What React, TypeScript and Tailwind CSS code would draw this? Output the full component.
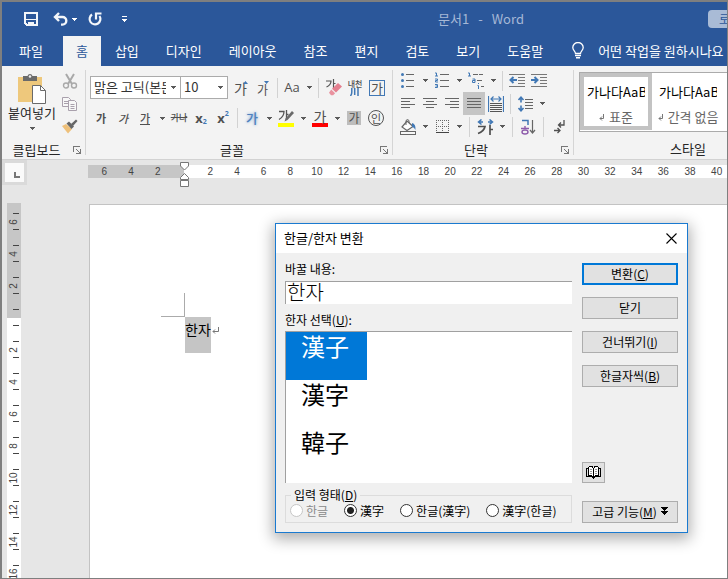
import { useState, type ReactNode } from "react";

const FONT = "font-['Noto_Sans_CJK_KR','Noto_Sans',sans-serif]";

/* ---------- shared pieces ---------- */

function CaretIcon() {
  return (
    <svg width="5" height="3" viewBox="0 0 5 3" fill="#5a5a5a" shapeRendering="crispEdges" aria-hidden="true">
      <path d="M0 0h5v1H4v1H3v1H2V2H1V1H0z" />
    </svg>
  );
}

function Caret({ label }: { label: string }) {
  return (
    <button type="button" aria-label={label} className="flex h-[22px] w-3 items-center justify-center">
      <CaretIcon />
    </button>
  );
}

function Tool({ label, pressed, children }: { label: string; pressed?: boolean; children: ReactNode }) {
  return (
    <button
      type="button"
      aria-label={label}
      className={
        "flex w-[22px] shrink-0 items-center justify-center whitespace-nowrap text-[#505050] " +
        (pressed ? "h-[23px] bg-[#c5c5c5]" : "h-[22px]")
      }
    >
      {children}
    </button>
  );
}

function Sep({ wide }: { wide?: boolean }) {
  return <span className={"h-5 w-px shrink-0 bg-[#d2d2d2] " + (wide ? "mx-1" : "mx-[3px]")} />;
}

function Launcher({ label }: { label: string }) {
  return (
    <button type="button" aria-label={label} className="flex size-3 items-center justify-center">
      <svg width="8" height="8" viewBox="0 0 8 8" fill="none" stroke="#777" shapeRendering="crispEdges">
        <path d="M0.5 6V0.5H7M7.5 3v4.5H3M3 3l4 4" />
      </svg>
    </button>
  );
}

function Group({ title, className, children }: { title: string; className: string; children: ReactNode }) {
  return (
    <section aria-label={title} className={"flex h-[93px] shrink-0 flex-col pt-[3px] " + className}>
      {children}
      <div className="mt-auto flex h-[18px] items-center pr-[2px]">
        <span className="flex-1 text-center text-[13px] leading-4 text-[#262626]">{title}</span>
        <Launcher label={title + " 설정"} />
      </div>
    </section>
  );
}

function GroupLine() {
  return <div className="my-1 w-px shrink-0 bg-[#d5d5d5]" />;
}

function Lines({ rows }: { rows: [number, number][] }) {
  return (
    <svg width="14" height="13" viewBox="0 0 14 13" fill="#666" shapeRendering="crispEdges" aria-hidden="true">
      {rows.map(([x, w], i) => (
        <rect key={i} x={x} y={1 + i * 3} width={w} height="1" />
      ))}
    </svg>
  );
}

/* ---------- title bar ---------- */

function TitleBar() {
  return (
    <header className="flex h-[34px] shrink-0 items-center bg-[#2b579a] pl-[22px] text-[13px] text-[#a6b8d6]">
      <div className="flex w-[105px] shrink-0 items-center text-white">
        <button type="button" aria-label="저장">
          <svg width="14" height="14" viewBox="0 0 14 14" fill="none" stroke="#f3f6fa" strokeWidth="2" shapeRendering="crispEdges">
            <path d="M1 1h12v12H3L1 11z" />
            <path d="M2 7.500h10" strokeWidth="1" />
            <path d="M4 10h6v4H7v-2H6v2H4z" fill="#f3f6fa" stroke="none" />
          </svg>
        </button>
        <button type="button" aria-label="실행 취소" className="ml-[15px]">
          <svg width="15" height="14" viewBox="0 0 15 14" fill="none" stroke="#f3f6fa" strokeWidth="2.400">
            <path d="M6 1 2 5l4 4M2 5h7.500a3.800 3.800 0 0 1 0 7.600H8" />
          </svg>
        </button>
        <button type="button" aria-label="실행 취소 목록" className="ml-1">
          <svg width="5" height="3" viewBox="0 0 5 3" fill="#fff" shapeRendering="crispEdges">
            <path d="M0 0h5v1H4v1H3v1H2V2H1V1H0z" />
          </svg>
        </button>
        <button type="button" aria-label="다시 실행" className="ml-[11px]">
          <svg width="14" height="14" viewBox="0 0 14 14" fill="none" stroke="#f3f6fa" strokeWidth="2.200">
            <path d="M4 2.500A5.400 5.400 0 1 0 11.500 4" />
            <path d="M8 7.500V1.500h5.500" />
          </svg>
        </button>
        <button type="button" aria-label="빠른 실행 도구 모음 사용자 지정" className="ml-5">
          <svg width="5" height="6" viewBox="0 0 5 6" fill="#fff" shapeRendering="crispEdges">
            <path d="M0 0h5v1H0zM0 3h5v1H4v1H3v1H2V5H1V4H0z" />
          </svg>
        </button>
      </div>
      <h1 className="flex min-w-0 flex-1 justify-center gap-[9px] pl-[125px] leading-4">
        <span>문서1</span>
        <span>-</span>
        <span>Word</span>
      </h1>
      <div className="flex w-[19px] justify-end overflow-hidden">
        <button type="button" className="flex h-[18px] w-full shrink-0 items-center overflow-hidden rounded-l-sm bg-[#a9bbd6] pl-[11px] text-xs whitespace-nowrap text-[#2b579a]">
          로그인
        </button>
      </div>
    </header>
  );
}

const TABS = ["삽입", "디자인", "레이아웃", "참조", "편지", "검토", "보기", "도움말"];

function TabBar() {
  return (
    <nav className="flex h-[30px] shrink-0 gap-px overflow-hidden bg-[#2b579a] pb-px text-[13px] leading-4 whitespace-nowrap text-white">
      <button type="button" className="mr-[2px] px-[17px]">파일</button>
      <button type="button" className="-mb-px bg-[#f3f3f3] px-[13px] text-[#2b579a]">홈</button>
      {TABS.map((t) => (
        <button key={t} type="button" className="px-[13px]">
          {t}
        </button>
      ))}
      <button type="button" className="flex items-center gap-[14px] pl-[15px]">
        <svg width="12" height="17" viewBox="0 0 12 17" fill="none" stroke="#fff" aria-hidden="true">
          <path d="M3.500 11.500C3.500 9 .8 8.500 .8 5.500a5.200 5 0 0 1 10.400 0c0 3-2.700 3.500-2.700 6z" strokeWidth="1.300" />
          <path d="M3 13.500h6M4 15.800h4" strokeWidth="1.400" />
        </svg>
        어떤 작업을 원하시나요
      </button>
    </nav>
  );
}

/* ---------- ribbon ---------- */

function ClipboardGroup() {
  return (
    <Group title="클립보드" className="w-[83px]">
      <div className="flex gap-[5px] pl-[5px]">
        <button type="button" className="flex w-[50px] flex-col items-center pt-1 text-[13px] leading-4 whitespace-nowrap text-[#262626]">
          <svg width="28" height="32" viewBox="0 0 28 32" aria-hidden="true">
            <rect x="0" y="4" width="24" height="25" fill="#eec87c" />
            <path d="M5 3h4.500a2.600 2.600 0 0 1 5 0H19v5H5z" fill="#6a6a6a" />
            <circle cx="12" cy="3.500" r="1.300" fill="#eee" />
            <path d="M14.500 12.500h8l5 5v13h-13z" fill="#fff" stroke="#6a6a6a" />
            <path d="M22.500 12.500v5h5" fill="none" stroke="#6a6a6a" />
          </svg>
          붙여넣기
          <span className="flex h-[14px] items-center">
            <CaretIcon />
          </span>
        </button>
        <div className="flex flex-col">
          <button type="button" aria-label="잘라내기" className="flex h-[23px] items-center">
            <svg width="16" height="16" viewBox="0 0 16 16" fill="none" stroke="#a9a9a9">
              <path d="M4 1l6 10M12 1L6 11" strokeWidth="2" />
              <circle cx="4" cy="12.500" r="2.500" strokeWidth="1.400" />
              <circle cx="12" cy="12.500" r="2.500" strokeWidth="1.400" />
            </svg>
          </button>
          <button type="button" aria-label="복사" className="flex h-[23px] items-center">
            <svg width="16" height="14" viewBox="0 0 16 14" fill="#f7f7f7" stroke="#a9a0ac">
              <path d="M.5.5h6l2 2v7h-8z" />
              <path d="M6.500 3.500h6l2 2v8h-8z" />
              <path d="M2 4.500h4M2 6.500h4M8.500 7.500h4M8.500 9.500h4M8.500 11.500h4" />
            </svg>
          </button>
          <button type="button" aria-label="서식 복사" className="flex h-[23px] items-center">
            <svg width="16" height="15" viewBox="0 0 16 15">
              <path d="M0 7l4-2 6 5-4 4.500z" fill="#eec07a" />
              <path d="M4.500 4.500L7 2.500l5 5-2.500 2.500z" fill="#666" />
              <path d="M9 5l5-4.500L15.500 2 11 7z" fill="#666" />
            </svg>
          </button>
        </div>
      </div>
    </Group>
  );
}

function Combo({ label, value, className }: { label: string; value: string; className: string }) {
  return (
    <div className={"relative h-[23px] " + className}>
      <select
        aria-label={label}
        className="block h-full w-full appearance-none overflow-hidden border border-[#ababab] bg-white pr-[14px] pb-[2px] pl-[3px] text-[13px] leading-4 text-[#333]"
      >
        <option>{value}</option>
      </select>
      <span className="pointer-events-none absolute top-0 right-[5px] flex h-full items-center">
        <CaretIcon />
      </span>
    </div>
  );
}

function FontGroup() {
  return (
    <Group title="글꼴" className="w-[306px]">
      <div className="flex flex-col gap-2 pt-[7px] pl-1">
        <div className="flex items-center">
          <div className="mr-[2px] flex">
            <Combo label="글꼴" value="맑은 고딕(본문 한글)" className="w-[91px]" />
            <Combo label="글꼴 크기" value="10" className="-ml-px w-[48px]" />
          </div>
          <Tool label="글꼴 크기 크게">
            <span className="text-[14px] leading-4">가</span>
            <svg width="5" height="14" viewBox="0 0 5 14" fill="#4178b5" className="-ml-1">
              <path d="M0 3L2.500 0 5 3z" />
            </svg>
          </Tool>
          <Tool label="글꼴 크기 작게">
            <span className="pt-1 text-[12px] leading-4">가</span>
            <svg width="5" height="14" viewBox="0 0 5 14" fill="#4178b5" className="-ml-1">
              <path d="M0 0h5L2.500 3z" />
            </svg>
          </Tool>
          <Sep />
          <Tool label="대/소문자 바꾸기">
            <span className="font-['Open_Sans',sans-serif] text-[13px]">Aa</span>
          </Tool>
          <Caret label="대/소문자 목록" />
          <Sep />
          <Tool label="모든 서식 지우기">
            <svg width="17" height="17" viewBox="0 0 17 17">
              <path d="M1 2h5q0 4-4.500 6M8.500 0v9M8.500 4.500h2" fill="none" stroke="#555" strokeWidth="1.200" />
              <path d="M13 4l4 3.500-6 6-4-3.800z" fill="#e47f8f" />
              <path d="M6.200 10.600l3.900 3.700-2 2H6l-2-2.500z" fill="#e9929f" />
            </svg>
          </Tool>
          <Tool label="윗주 달기">
            <span className="flex flex-col items-center">
              <span className="text-[8px] leading-[9px] font-medium">내천</span>
              <svg width="9" height="8" viewBox="0 0 9 8" fill="none" stroke="#4178b5" strokeWidth="1.500">
                <path d="M1.800 0v4q0 3-1.500 4M4.700 0v7M8 0v8" />
              </svg>
            </span>
          </Tool>
          <Tool label="문자 테두리">
            <span className="flex size-4 items-center justify-center border border-[#4178b5] text-[13px] leading-none">가</span>
          </Tool>
        </div>
        <div className="flex items-center">
          <Tool label="굵게">
            <span className="text-[11px] leading-4 font-bold">가</span>
          </Tool>
          <Tool label="기울임꼴">
            <span className="text-[11px] leading-4 font-medium italic">가</span>
          </Tool>
          <Tool label="밑줄">
            <span className="border-b border-[#505050] text-[11px] leading-3 font-medium">가</span>
          </Tool>
          <Caret label="밑줄 목록" />
          <Tool label="취소선">
            <span className="text-[9px] font-medium line-through">가나</span>
          </Tool>
          <Tool label="아래 첨자">
            <span className="flex items-end font-['Open_Sans',sans-serif] text-[13px] leading-4 font-bold">
              x<span className="text-[7px] leading-[8px] text-[#4178b5]">2</span>
            </span>
          </Tool>
          <Tool label="위 첨자">
            <span className="flex items-start font-['Open_Sans',sans-serif] text-[13px] leading-4 font-bold">
              x<span className="text-[7px] leading-[8px] text-[#4178b5]">2</span>
            </span>
          </Tool>
          <Sep />
          <Tool label="텍스트 효과">
            <span className="text-[13px] leading-4 font-medium text-[#4f81bd] [text-shadow:0_0_3px_#6b9bd2]">가</span>
          </Tool>
          <Caret label="텍스트 효과 목록" />
          <Tool label="텍스트 강조 색">
            <svg width="16" height="17" viewBox="0 0 16 17">
              <path d="M1 1.500h5q0 5-5 8M8.500 0v9M8.500 4.500h2" fill="none" stroke="#555" strokeWidth="1.300" />
              <path d="M14 1l2 2-6.500 7-3 1.500 1-3z" fill="#6a6a6a" />
              <rect y="13" width="16" height="4" fill="#ff0" />
            </svg>
          </Tool>
          <Caret label="강조 색 목록" />
          <Tool label="글꼴 색">
            <span className="flex w-4 flex-col items-center border-b-4 border-[#f00] text-[14px] leading-[13px]">가</span>
          </Tool>
          <Caret label="글꼴 색 목록" />
          <Tool label="문자 음영">
            <span className="flex size-[14px] items-center justify-center bg-[#bdbdbd] text-[12px] leading-none">가</span>
          </Tool>
          <Tool label="원 문자">
            <span className="flex size-4 items-center justify-center rounded-full border border-[#555] text-[11px] leading-none">인</span>
          </Tool>
        </div>
      </div>
    </Group>
  );
}

function ParagraphGroup() {
  return (
    <Group title="단락" className="w-[180px]">
      <div className="flex flex-col pl-1">
        <div className="flex h-[23px] items-center">
          <Tool label="글머리 기호">
            <svg width="14" height="15" viewBox="0 0 14 15">
              <g fill="#4178b5">
                <circle cx="1.500" cy="1.500" r="1.500" />
                <circle cx="1.500" cy="7.500" r="1.500" />
                <circle cx="1.500" cy="13.500" r="1.500" />
              </g>
              <path d="M5 1.500h8M5 7.500h8M5 13.500h8" stroke="#666" />
            </svg>
          </Tool>
          <Caret label="글머리 기호 목록" />
          <Tool label="번호 매기기">
            <svg width="14" height="17" viewBox="0 0 14 17" fill="none">
              <path d="M0 1h1.500v3M0 4h3M0 7h2.500v1.500H.5V10H3M0 12.500h2.500v3H0M.5 14h2" stroke="#4178b5" />
              <path d="M5 2.500h9M5 8.500h9M5 14.500h9" stroke="#666" />
            </svg>
          </Tool>
          <Caret label="번호 목록" />
          <Tool label="다단계 목록">
            <svg width="17" height="17" viewBox="0 0 17 17" fill="none">
              <path d="M0 1h1.500v3M0 4h3M4.500 7H7v3.500H4.500v-2H7M10.500 11v1M9.500 13.500h1V17" stroke="#4178b5" />
              <path d="M5 2.500h10M9 8.500h6M13 14.500h3" stroke="#666" strokeDasharray="5 1" />
            </svg>
          </Tool>
          <Caret label="다단계 목록 선택" />
          <Sep />
          <Tool label="내어쓰기">
            <svg width="16" height="13" viewBox="0 0 16 13" fill="none">
              <path d="M0 .5h16M9 3.500h7M9 6.500h7M9 9.500h7M0 12.500h16" stroke="#777" />
              <path d="M8 6H1.500M4.500 3L1.500 6l3 3" stroke="#4178b5" strokeWidth="2" />
            </svg>
          </Tool>
          <Tool label="들여쓰기">
            <svg width="16" height="13" viewBox="0 0 16 13" fill="none">
              <path d="M0 .5h16M9 3.500h7M9 6.500h7M9 9.500h7M0 12.500h16" stroke="#777" />
              <path d="M0 6h6M3.500 3l3 3-3 3" stroke="#4178b5" strokeWidth="2" />
            </svg>
          </Tool>
        </div>
        <div className="flex h-[23px] items-center">
          <Tool label="왼쪽 맞춤"><Lines rows={[[0, 14], [0, 9], [0, 14], [0, 9]]} /></Tool>
          <Tool label="가운데 맞춤"><Lines rows={[[0, 14], [3, 8], [0, 14], [3, 8]]} /></Tool>
          <Tool label="오른쪽 맞춤"><Lines rows={[[0, 14], [5, 9], [0, 14], [5, 9]]} /></Tool>
          <Tool label="양쪽 맞춤" pressed><Lines rows={[[0, 14], [0, 14], [0, 14], [0, 14]]} /></Tool>
          <Tool label="균등 분할">
            <svg width="16" height="16" viewBox="0 0 16 16" fill="none">
              <path d="M.5 0v16M15.500 0v16M3 3h10M5.500 .5L3 3l2.500 2.500M10.500 .5L13 3l-2.500 2.500" stroke="#4178b5" strokeWidth="1.200" />
              <path d="M2 7.500h12M2 9.500h12M2 11.500h12M2 13.500h12M2 15.500h12" stroke="#555" />
            </svg>
          </Tool>
          <Sep />
          <Tool label="줄 간격">
            <svg width="15" height="16" viewBox="0 0 15 16" fill="none">
              <path d="M3 1v5.500M3 9.500V15M.5 4L3 1.200 5.500 4M.5 12L3 14.800 5.500 12" stroke="#4178b5" strokeWidth="1.600" />
              <path d="M7 3.500h8M7 6.500h8M7 9.500h8M7 12.500h8" stroke="#666" />
            </svg>
          </Tool>
          <Caret label="줄 간격 목록" />
        </div>
        <div className="flex h-[23px] items-center">
          <Tool label="음영">
            <svg width="17" height="16" viewBox="0 0 17 16" fill="none" stroke="#666">
              <path d="M7 2l6 5.500-6 4-5-3.500z" fill="#fff" strokeWidth="1.200" />
              <path d="M6 6V1.500q1.500-2 3 0V4" />
              <path d="M12 4q4 1 3.500 7-1.500-3-3.500-3z" fill="#4178b5" stroke="none" />
              <rect x=".5" y="12.500" width="15" height="3" fill="#f7f7f7" />
            </svg>
          </Tool>
          <Caret label="음영 목록" />
          <Tool label="테두리">
            <svg width="13" height="13" viewBox="0 0 13 13" fill="none" stroke="#666" shapeRendering="crispEdges">
              <path d="M0 .5h13M0 6.500h13M.5 0v12M6.500 0v12M12.500 0v12" strokeDasharray="1 1" />
              <path d="M0 12.500h13" stroke="#444" />
            </svg>
          </Tool>
          <Caret label="테두리 목록" />
          <Sep wide />
          <Tool label="한글 입력 체계">
            <svg width="17" height="16" viewBox="0 0 17 16" fill="none">
              <path d="M4.500 .5L1.500 3l3 2.500M1.500 3H6M12.500 .5l3 2.500-3 2.500M15.500 3H11" stroke="#4178b5" strokeWidth="1.500" />
              <path d="M1 7.500h7q-1 5-7 7M13 6v10M13 10.500h3" stroke="#505050" strokeWidth="1.700" />
            </svg>
          </Tool>
          <Caret label="한글 입력 체계 목록" />
          <Sep wide />
          <Tool label="정렬">
            <svg width="15" height="16" viewBox="0 0 15 16" fill="none">
              <path d="M1 1.500h6V6" stroke="#4178b5" strokeWidth="1.500" />
              <path d="M0 9.500h8M4 7v2" stroke="#8d5bab" strokeWidth="1.400" />
              <ellipse cx="4" cy="13" rx="3" ry="2" stroke="#8d5bab" strokeWidth="1.400" />
              <path d="M11.500 1v13M9 11l2.500 3 2.500-3" stroke="#666" strokeWidth="1.200" />
            </svg>
          </Tool>
          <Sep wide />
          <Tool label="편집 기호 표시">
            <svg width="11" height="14" viewBox="0 0 11 14" fill="none" stroke="#505050" strokeWidth="1.300">
              <path d="M10 0v5H4.500M7 2.500L4.500 5 7 7.500M0 10.500h6M3.500 8L6 10.500 3.500 13" />
            </svg>
          </Tool>
        </div>
      </div>
    </Group>
  );
}

function StyleCard({ name, selected }: { name: string; selected?: boolean }) {
  return (
    <button
      type="button"
      className={
        "flex h-[57px] w-[72px] shrink-0 flex-col justify-between overflow-hidden border-4 px-[3px] pt-[6px] pb-px whitespace-nowrap " +
        (selected ? "border-[#c3c3c3]" : "border-white")
      }
    >
      <span className="w-full overflow-hidden text-left text-[13px] leading-[18px] text-black">가나다AaBb</span>
      <span className="flex w-full items-center justify-center gap-1 text-[13px] leading-4 text-[#666]">
        <svg width="6" height="7" viewBox="0 0 6 7" fill="none" stroke="#777" className="shrink-0">
          <path d="M4.500 0v4.500H1M3 2.500L1 4.500l2 2" />
        </svg>
        {name}
      </span>
    </button>
  );
}

function StyleGroup() {
  return (
    <section aria-label="스타일" className="flex h-[93px] min-w-0 flex-1 flex-col overflow-hidden pt-[6px] pl-[5px]">
      <div className="flex h-[60px] overflow-hidden border border-r-0 border-[#ababab] bg-white">
        <StyleCard name="표준" selected />
        <StyleCard name="간격 없음" />
      </div>
      <div className="mt-auto h-[18px] pl-[70px] text-center text-[13px] leading-4 text-[#262626]">스타일</div>
    </section>
  );
}

/* ---------- rulers ---------- */

const LEFT_MARKS = [6, 4, 2];
const RIGHT_MARKS = Array.from({ length: 20 }, (_, i) => (i + 1) * 2);
const DOWN_MARKS = RIGHT_MARKS.slice(0, 8);

function HorizontalRuler() {
  return (
    <div className="flex h-[25px] shrink-0 overflow-hidden">
      <button type="button" aria-label="탭 종류" className="flex size-[25px] shrink-0 items-center justify-center border-[3px] border-[#dadada] bg-[#fafafa] pt-1 pl-1">
        <svg width="6" height="6" viewBox="0 0 6 6" fill="#777" shapeRendering="crispEdges">
          <path d="M0 0h2v4h4v2H0z" />
        </svg>
      </button>
      <div className="mt-[5px] ml-[61px] flex h-[13px] min-w-0 flex-1 font-['Liberation_Sans',sans-serif] text-[10px] leading-[14px] text-[#444]">
        <div className="grid w-24 shrink-0 grid-cols-3 bg-[#c6c6c6] pr-[13px] pl-[3px] text-center">
          {LEFT_MARKS.map((n) => (
            <span key={n}>{n}</span>
          ))}
        </div>
        <div className="min-w-0 flex-1 overflow-hidden bg-white pl-[13px]">
          <div className="grid w-[533px] grid-cols-20 text-center">
            {RIGHT_MARKS.map((n) => (
              <span key={n}>{n}</span>
            ))}
          </div>
        </div>
      </div>
    </div>
  );
}

function IndentMarker() {
  return (
    <svg className="absolute top-[162px] left-[180px]" width="9" height="25" viewBox="0 0 9 25" fill="#fff" stroke="#777" aria-hidden="true">
      <path d="M.5.5h8V4l-4 4-4-4z" />
      <path d="M4.500 11.500l4 4v2H.5v-2z" />
      <path d="M.5 18.500h8v6h-8z" />
    </svg>
  );
}

function Tick() {
  return <span className="mr-[2px] h-px w-[6px] shrink-0 self-end bg-[#444]" />;
}

function RulerCell({ n }: { n: number }) {
  return (
    <div className="flex h-8 shrink-0 flex-col pt-2">
      <Tick />
      <div className="flex h-[15px] items-center justify-center">
        <span className="-rotate-90">{n}</span>
      </div>
      <Tick />
    </div>
  );
}

function VerticalRuler() {
  return (
    <div className="mt-[18px] ml-[5px] flex w-[14px] shrink-0 flex-col overflow-hidden bg-white font-['Liberation_Sans',sans-serif] text-[10px] leading-[14px] text-[#444]">
      <div className="flex shrink-0 flex-col bg-[#c6c6c6] pt-[2px]">
        {LEFT_MARKS.map((n) => (
          <RulerCell key={n} n={n} />
        ))}
        <div className="flex h-[17px] flex-col pt-2">
          <Tick />
        </div>
      </div>
      <div className="flex flex-col">
        <div className="flex h-[15px] flex-col pt-[7px]">
          <Tick />
        </div>
        {DOWN_MARKS.map((n) => (
          <RulerCell key={n} n={n} />
        ))}
      </div>
    </div>
  );
}

function DocumentPage() {
  return (
    <main className="mt-[19px] ml-[68px] min-w-0 flex-1 border-t border-l border-[#c3c3c3] bg-white pt-[88px]">
      <div className="ml-[71px] size-6 border-r border-b border-[#ababab]" />
      <p className="ml-[95px] flex text-[14px] leading-6 text-black">
        <span className="h-9 bg-[#c5c5c5]">한자</span>
        <svg className="mt-[10px] ml-px" width="7" height="8" viewBox="0 0 7 8" fill="none" stroke="#777" aria-hidden="true">
          <path d="M6.500 0v4.500H1M3 2.500L1 4.500l2 2" />
        </svg>
      </p>
    </main>
  );
}

/* ---------- conversion dialog ---------- */

function DialogButton({ primary, children }: { primary?: boolean; children: ReactNode }) {
  return (
    <button
      type="button"
      className={
        "flex h-[22px] shrink-0 items-center justify-center bg-[#e1e1e1] pb-px text-xs text-black " +
        (primary ? "border-2 border-[#0078d7]" : "border border-[#adadad]")
      }
    >
      {children}
    </button>
  );
}

const CANDIDATES = ["漢子", "漢字", "韓子"];
const FORMATS = ["한글", "漢字", "한글(漢字)", "漢字(한글)"];
const SUNKEN = "border-t border-l border-[#a0a0a0] bg-white";

function HanjaDialog() {
  const [picked, setPicked] = useState(0);
  const [format, setFormat] = useState("漢字");
  return (
    <div
      role="dialog"
      aria-labelledby="dlg-title"
      className="absolute top-[223px] left-[275px] w-[413px] border border-[#1a7ad0] bg-[#f0f0f0] text-xs text-black shadow-[0_4px_14px_2px_rgba(0,0,0,0.32)]"
    >
      <div className="flex h-[29px] items-center justify-between bg-white pr-[10px] pb-px pl-2">
        <h2 id="dlg-title" className="text-[13px]">한글/한자 변환</h2>
        <button type="button" aria-label="창 닫기">
          <svg width="11" height="11" viewBox="0 0 11 11" fill="none" stroke="#000" strokeWidth="1.100">
            <path d="M.5.5l10 10M10.500.5l-10 10" />
          </svg>
        </button>
      </div>
      <div className="flex gap-[10px] px-[9px] pt-2 pb-[9px]">
        <div className="flex min-w-0 flex-1 flex-col leading-4">
          <label htmlFor="source">바꿀 내용:</label>
          <input id="source" defaultValue="한자" className={"mt-1 h-[23px] pb-[3px] pl-px text-[20px] leading-5 font-light outline-none " + SUNKEN} />
          <span id="list-label" className="mt-2">
            한자 선택(<u>U</u>):
          </span>
          <ul role="listbox" aria-labelledby="list-label" className={"mt-[3px] h-[152px] " + SUNKEN}>
            {CANDIDATES.map((c, i) => (
              <li
                key={c}
                role="option"
                aria-selected={i === picked}
                onClick={() => setPicked(i)}
                className={"h-12 w-[81px] pl-[15px] text-[24px] leading-7 " + (i === picked ? "bg-[#0078d7] text-white" : "")}
              >
                {c}
              </li>
            ))}
          </ul>
          <fieldset className="mt-1 border border-[#dcdcdc] pl-1">
            <legend className="ml-px px-[3px]">
              입력 형태(<u>D</u>)
            </legend>
            <div className="mb-1 flex h-[15px] items-center gap-4 whitespace-nowrap">
              {FORMATS.map((f, i) => (
                <label key={f} className={"flex items-center gap-[3px] " + (i === 0 ? "text-[#8a8a8a]" : "")}>
                  <input
                    type="radio"
                    name="format"
                    disabled={i === 0}
                    checked={format === f}
                    onChange={() => setFormat(f)}
                    className="size-[13px] appearance-none rounded-full border border-[#333] bg-white checked:bg-[radial-gradient(circle,#222_0_3px,#fff_4px)] disabled:border-[#c6c6c6]"
                  />
                  {f}
                </label>
              ))}
            </div>
          </fieldset>
        </div>
        <div className="flex w-24 shrink-0 flex-col gap-3 pt-[2px]">
          <DialogButton primary>변환(<u>C</u>)</DialogButton>
          <DialogButton>닫기</DialogButton>
          <DialogButton>건너뛰기(<u>I</u>)</DialogButton>
          <DialogButton>한글자씩(<u>B</u>)</DialogButton>
          <button type="button" aria-label="한자 사전" className="mt-auto mb-[6px] flex h-[21px] w-[23px] items-center justify-center border border-[#adadad] bg-[#e1e1e1]">
            <svg width="15" height="13" viewBox="0 0 15 13" fill="none" stroke="#000" shapeRendering="crispEdges">
              <path d="M7.500 2.500L6 .5H3.500L2.500 1.500v8h3l2 2 2-2h3v-8L11.500.5H9z" fill="#fff" />
              <path d="M7.500 2v10M2.500 2.500h-2v8h5l2 2 2-2h5v-8h-2" />
              <path d="M4 3.500h2M4 5.500h2M4 7.500h2M9 3.500h2M9 5.500h2M9 7.500h2" stroke="#999" />
            </svg>
          </button>
          <DialogButton>
            고급 기능(<u>M</u>)
            <svg className="ml-1" width="7" height="9" viewBox="0 0 7 9" fill="#000" shapeRendering="crispEdges">
              <path d="M0 0h7v1H6v1H5v1H4v1h3v1H6v1H5v1H4v1H3V7H2V6H1V5H0V4h3V3H2V2H1V1H0z" />
            </svg>
          </DialogButton>
        </div>
      </div>
    </div>
  );
}

export default function App() {
  return (
    <div className={"relative flex h-screen flex-col overflow-hidden border-t-2 border-r border-b border-l-2 border-[#7f7f7f] bg-[#e6e6e6] " + FONT}>
      <TitleBar />
      <TabBar />
      <div className="flex shrink-0 overflow-hidden border-b border-[#d2d2d2] bg-[#f3f3f3]">
        <ClipboardGroup />
        <GroupLine />
        <FontGroup />
        <GroupLine />
        <ParagraphGroup />
        <GroupLine />
        <StyleGroup />
      </div>
      <HorizontalRuler />
      <div className="flex min-h-0 flex-1 overflow-hidden">
        <VerticalRuler />
        <DocumentPage />
      </div>
      <div className="absolute -top-[2px] -left-[2px]">
        <IndentMarker />
        <HanjaDialog />
      </div>
    </div>
  );
}
